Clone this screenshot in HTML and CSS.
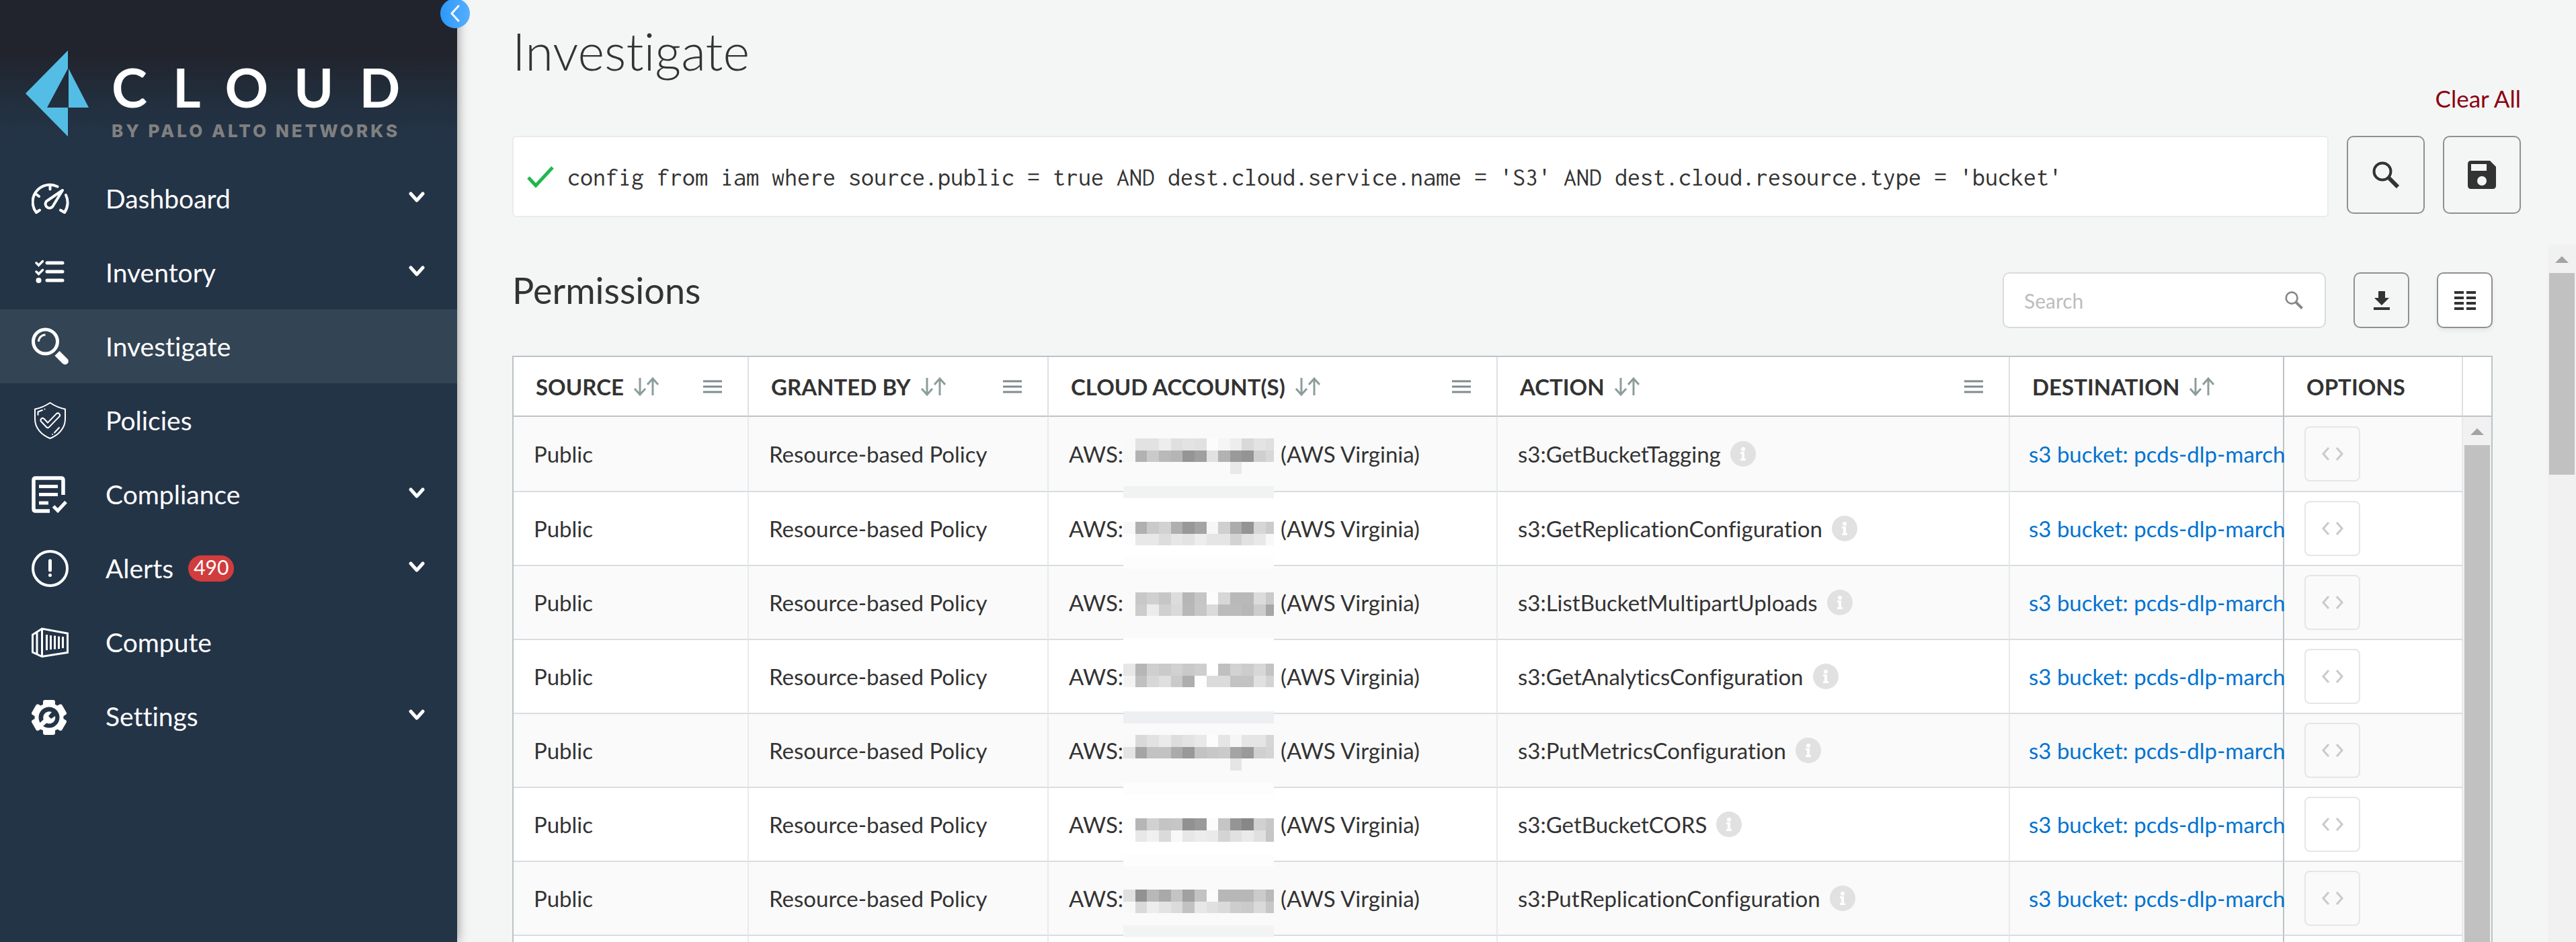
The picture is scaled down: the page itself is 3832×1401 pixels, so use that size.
FILE: index.html
```html
<!DOCTYPE html>
<html lang="en">
<head>
<meta charset="utf-8">
<title>Investigate</title>
<meta name="viewport" content="width=device-width, initial-scale=1">
<link rel="stylesheet" href="styles.css">
</head>
<body>
<svg class="sprite" aria-hidden="true">
  <symbol id="i-chevron" viewBox="0 0 24 16"><path d="M3 3l9 10 9-10" fill="none" stroke="currentColor" stroke-width="5" stroke-linecap="round" stroke-linejoin="round"/></symbol>
  <symbol id="i-sort" viewBox="0 0 40 28"><path d="M10 1v24M2 17l8 9 8-9M29 27V3M21 11l8-9 8 9" fill="none" stroke="currentColor" stroke-width="3"/></symbol>
  <symbol id="i-menu" viewBox="0 0 28 20"><path d="M0 2h28M0 10h28M0 18h28" stroke="currentColor" stroke-width="3"/></symbol>
  <symbol id="i-info" viewBox="0 0 38 38"><circle cx="19" cy="19" r="19" fill="#e1e1e1"/><circle cx="19" cy="12" r="3" fill="#fff"/><path d="M15 16h6v10h2v3h-8v-3h2v-7h-2z" fill="#fff"/></symbol>
  <symbol id="i-code" viewBox="0 0 34 20"><path d="M11 1L3 10l8 9M23 1l8 9-8 9" fill="none" stroke="currentColor" stroke-width="3"/></symbol>
  <symbol id="i-search" viewBox="0 0 40 40"><circle cx="15" cy="15" r="12.5" fill="none" stroke="currentColor" stroke-width="4"/><path d="M24 24l14 14" stroke="currentColor" stroke-width="6"/></symbol>
</svg>

<div class="app">
  <aside class="sidebar">
    <button class="collapse" type="button" aria-label="Collapse menu">
      <svg width="16" height="26" viewBox="0 0 16 26"><path d="M13 2L3 13l10 11" fill="none" stroke="#fff" stroke-width="3" stroke-linecap="round" stroke-linejoin="round"/></svg>
    </button>
    <div class="brand">
      <svg class="brand-mark" width="94" height="128" viewBox="0 0 94 128" aria-hidden="true"><path d="M63 0v27L32 85h31v43L0 64zM64 27l30 58H64z" fill="#54bde5"/></svg>
      <div class="brand-text">
        <span class="brand-name">CLOUD</span>
        <span class="brand-by">BY PALO ALTO NETWORKS</span>
      </div>
    </div>
    <nav class="nav">
      <a href="#" class="nav-item">
        <svg class="nav-icon" viewBox="0 0 56 56"><path d="M12 45.500l-5 3.500A25.500 25.500 0 0 1 38.500 10.500M43 45.500l6 3.500A26 26 0 0 0 51 23M27.500 8v6.500M7 22l4 3M46 16L24 31a6 6 0 1 0 8 8z" fill="none" stroke="#fff" stroke-width="4" stroke-linecap="round" stroke-linejoin="round"/></svg>
        <span>Dashboard</span><svg class="chevron"><use href="#i-chevron"/></svg></a>
      <a href="#" class="nav-item">
        <svg class="nav-icon" viewBox="0 0 56 56"><path d="M23 14h23M23 27h23M23 40h23" fill="none" stroke="#fff" stroke-width="5" stroke-linecap="round"/><path d="M7 14l3.500 3.500 6-6M7 27l3.500 3.500 6-6" fill="none" stroke="#fff" stroke-width="3.500" stroke-linecap="round"/><circle cx="10.500" cy="40" r="4" fill="#fff"/></svg>
        <span>Inventory</span><svg class="chevron"><use href="#i-chevron"/></svg></a>
      <a href="#" class="nav-item active" aria-current="page">
        <svg class="nav-icon" viewBox="0 0 56 56"><circle cx="20.500" cy="21" r="18" fill="none" stroke="#fff" stroke-width="5"/><path d="M10.500 21a10 10 0 0 1 10-10" fill="none" stroke="#fff" stroke-width="3"/><path d="M38 38.500L49.500 50" stroke="#fff" stroke-width="10"/><circle cx="49.800" cy="50.300" r="5" fill="#fff"/></svg>
        <span>Investigate</span></a>
      <a href="#" class="nav-item">
        <svg class="nav-icon" viewBox="0 0 56 56" fill="none" stroke="#fff" stroke-linecap="round" stroke-linejoin="round"><path d="M27.500 2C20 7 13 10 5 11.500V26c0 14 10 24 22.500 29C40 50 50 40 50 26V11.500C42 10 35 7 27.500 2zM9.500 20v-4.500L16 13M19.500 11.500h0M41 39l-7 7.500M31 49h0" stroke-width="2"/><path d="M16.500 28l7.500 8 15-15.500" stroke-width="8"/><path d="M16.500 28l7.500 8 15-15.500" stroke="#243447" stroke-width="4"/></svg>
        <span>Policies</span></a>
      <a href="#" class="nav-item">
        <svg class="nav-icon" viewBox="0 0 56 56" fill="none" stroke="#fff"><path d="M27 53H6q-3 0-3-3V7q0-3 3-3h38q3 0 3 3v22" stroke-width="5.500"/><path d="M11 16.500h28M11 28.500h28M11 41h14" stroke-width="5"/><path d="M31 44l8 8 14-14" stroke="#243447" stroke-width="14"/><path d="M32.500 46l6.500 6.500L51 39.500" stroke-width="5"/></svg>
        <span>Compliance</span><svg class="chevron"><use href="#i-chevron"/></svg></a>
      <a href="#" class="nav-item">
        <svg class="nav-icon" viewBox="0 0 56 56" fill="none" stroke="#fff"><circle cx="27.500" cy="28.500" r="25.500" stroke-width="4"/><path d="M27.500 17v14M27.500 38.500h0" stroke-width="5" stroke-linecap="round"/></svg>
        <span>Alerts</span><span class="badge">490</span><svg class="chevron"><use href="#i-chevron"/></svg></a>
      <a href="#" class="nav-item">
        <svg class="nav-icon" viewBox="0 0 56 56" fill="none" stroke="#fff"><path d="M1.500 17l14-9L53.500 15v28.500l-38 6-14-6.500zM15.500 8v41M8 13v33" stroke-width="3"/><path d="M22.500 17v23M28.500 18v21M34.500 18.500v20M40.500 19.500v18.500M46.500 20v17" stroke-width="3"/></svg>
        <span>Compute</span></a>
      <a href="#" class="nav-item">
        <svg class="nav-icon" viewBox="0 0 56 56"><g fill="#fff"><circle cx="26" cy="30" r="21.500"/><rect x="17" y="4" width="18" height="52" rx="3"/><rect x="17" y="4" width="18" height="52" rx="3" transform="rotate(60 26 30)"/><rect x="17" y="4" width="18" height="52" rx="3" transform="rotate(120 26 30)"/></g><circle cx="26" cy="30" r="15.500" fill="#243447"/><path d="M12 43l12-11" stroke="#fff" stroke-width="7"/><path d="M30 22l-5 6 4 4 6-4a9 9 0 1 1-5-6z" fill="#fff"/></svg>
        <span>Settings</span><svg class="chevron"><use href="#i-chevron"/></svg></a>
    </nav>
  </aside>

  <main class="main">
    <header class="page-head">
      <h1>Investigate</h1>
      <a href="#" class="clear-all">Clear All</a>
    </header>
    <form class="query-row">
      <label class="query-box">
        <svg width="40" height="32" viewBox="0 0 40 32" aria-hidden="true"><path d="M2 17l11 12L38 2" fill="none" stroke="#1fb84f" stroke-width="5"/></svg>
        <input class="query-input" type="text" aria-label="Query" spellcheck="false" value="config from iam where source.public = true AND dest.cloud.service.name = 'S3' AND dest.cloud.resource.type = 'bucket'">
      </label>
      <button class="btn-lg" type="button" aria-label="Run search"><svg width="40" height="40"><use href="#i-search"/></svg></button>
      <button class="btn-lg" type="button" aria-label="Save search"><svg width="42" height="42" viewBox="0 0 42 42"><path fill-rule="evenodd" d="M5 0h28l9 9v28q0 5-5 5H5q-5 0-5-5V5q0-5 5-5zM5 5v10h23V5zM21 23a7 7 0 1 0 0 14a7 7 0 1 0 0-14z" fill="currentColor"/></svg></button>
    </form>

    <div class="results">
      <section class="results-body">
        <div class="toolbar">
          <h2>Permissions</h2>
          <label class="search-box">
            <input type="search" placeholder="Search" aria-label="Search permissions">
            <svg width="27" height="27" aria-hidden="true"><use href="#i-search"/></svg>
          </label>
          <button class="btn-md" type="button" aria-label="Download"><svg width="24" height="28" viewBox="0 0 24 28"><path d="M7 0h10v10h6L12 21 1 10h6zM0 24h24v4H0z" fill="currentColor"/></svg></button>
          <button class="btn-md filled" type="button" aria-label="Columns"><svg width="32" height="28" viewBox="0 0 32 28"><path d="M0 2h14M18 2h14M0 10h14M18 10h14M0 18h14M18 18h14M0 26h14M18 26h14" stroke="currentColor" stroke-width="4"/></svg></button>
        </div>

        <div class="grid">
          <table>
            <colgroup><col class="c-source"><col class="c-granted"><col class="c-account"><col class="c-action"><col><col class="c-options"></colgroup>
            <thead>
              <tr>
                <th><div class="th"><span>SOURCE</span><svg class="sort"><use href="#i-sort"/></svg><svg class="menu"><use href="#i-menu"/></svg></div></th>
                <th><div class="th"><span>GRANTED BY</span><svg class="sort"><use href="#i-sort"/></svg><svg class="menu"><use href="#i-menu"/></svg></div></th>
                <th><div class="th"><span>CLOUD ACCOUNT(S)</span><svg class="sort"><use href="#i-sort"/></svg><svg class="menu"><use href="#i-menu"/></svg></div></th>
                <th><div class="th"><span>ACTION</span><svg class="sort"><use href="#i-sort"/></svg><svg class="menu"><use href="#i-menu"/></svg></div></th>
                <th><div class="th"><span>DESTINATION</span><svg class="sort"><use href="#i-sort"/></svg></div></th>
                <th><div class="th"><span>OPTIONS</span></div></th>
              </tr>
            </thead>
            <tbody>
              <tr>
                <td>Public</td><td>Resource-based Policy</td>
                <td><div class="td">AWS:<svg class="mask" data-mask="0"></svg>(AWS Virginia)</div></td>
                <td><div class="td">s3:GetBucketTagging<svg class="info"><use href="#i-info"/></svg></div></td>
                <td><a href="#">s3 bucket: pcds-dlp-march</a></td>
                <td><button class="code" type="button" aria-label="View policy"><svg width="34" height="20"><use href="#i-code"/></svg></button></td>
              </tr>
              <tr>
                <td>Public</td><td>Resource-based Policy</td>
                <td><div class="td">AWS:<svg class="mask" data-mask="1"></svg>(AWS Virginia)</div></td>
                <td><div class="td">s3:GetReplicationConfiguration<svg class="info"><use href="#i-info"/></svg></div></td>
                <td><a href="#">s3 bucket: pcds-dlp-march</a></td>
                <td><button class="code" type="button" aria-label="View policy"><svg width="34" height="20"><use href="#i-code"/></svg></button></td>
              </tr>
              <tr>
                <td>Public</td><td>Resource-based Policy</td>
                <td><div class="td">AWS:<svg class="mask" data-mask="2"></svg>(AWS Virginia)</div></td>
                <td><div class="td">s3:ListBucketMultipartUploads<svg class="info"><use href="#i-info"/></svg></div></td>
                <td><a href="#">s3 bucket: pcds-dlp-march</a></td>
                <td><button class="code" type="button" aria-label="View policy"><svg width="34" height="20"><use href="#i-code"/></svg></button></td>
              </tr>
              <tr>
                <td>Public</td><td>Resource-based Policy</td>
                <td><div class="td">AWS:<svg class="mask" data-mask="3"></svg>(AWS Virginia)</div></td>
                <td><div class="td">s3:GetAnalyticsConfiguration<svg class="info"><use href="#i-info"/></svg></div></td>
                <td><a href="#">s3 bucket: pcds-dlp-march</a></td>
                <td><button class="code" type="button" aria-label="View policy"><svg width="34" height="20"><use href="#i-code"/></svg></button></td>
              </tr>
              <tr>
                <td>Public</td><td>Resource-based Policy</td>
                <td><div class="td">AWS:<svg class="mask" data-mask="4"></svg>(AWS Virginia)</div></td>
                <td><div class="td">s3:PutMetricsConfiguration<svg class="info"><use href="#i-info"/></svg></div></td>
                <td><a href="#">s3 bucket: pcds-dlp-march</a></td>
                <td><button class="code" type="button" aria-label="View policy"><svg width="34" height="20"><use href="#i-code"/></svg></button></td>
              </tr>
              <tr>
                <td>Public</td><td>Resource-based Policy</td>
                <td><div class="td">AWS:<svg class="mask" data-mask="5"></svg>(AWS Virginia)</div></td>
                <td><div class="td">s3:GetBucketCORS<svg class="info"><use href="#i-info"/></svg></div></td>
                <td><a href="#">s3 bucket: pcds-dlp-march</a></td>
                <td><button class="code" type="button" aria-label="View policy"><svg width="34" height="20"><use href="#i-code"/></svg></button></td>
              </tr>
              <tr>
                <td>Public</td><td>Resource-based Policy</td>
                <td><div class="td">AWS:<svg class="mask" data-mask="6"></svg>(AWS Virginia)</div></td>
                <td><div class="td">s3:PutReplicationConfiguration<svg class="info"><use href="#i-info"/></svg></div></td>
                <td><a href="#">s3 bucket: pcds-dlp-march</a></td>
                <td><button class="code" type="button" aria-label="View policy"><svg width="34" height="20"><use href="#i-code"/></svg></button></td>
              </tr>
              <tr><td></td><td></td><td></td><td></td><td></td><td></td></tr>
            </tbody>
          </table>
          <div class="grid-gutter">
            <div class="gutter-head"></div>
            <div class="scrollbar"><span class="arrow"></span><span class="thumb thumb-full"></span></div>
          </div>
        </div>
      </section>
      <div class="scrollbar"><span class="arrow"></span><span class="thumb"></span></div>
    </div>
  </main>
</div>
<script src="script.js"></script>
</body>
</html>
```
FILE: styles.css
```css
* { box-sizing: border-box; }
body {
  margin: 0;
  background: #f4f6f5;
  color: #333;
  font-family: Lato, "Open Sans", sans-serif;
  font-size: 33px;
  font-variant-ligatures: none;
}
a { color: inherit; text-decoration: none; }
button { margin: 0; padding: 0; font: inherit; color: inherit; cursor: pointer; }
svg { display: block; flex: none; }
.sprite { display: none; }

.app { display: flex; height: 100vh; overflow: hidden; }

/* Sidebar */
.sidebar {
  position: relative;
  flex: none;
  width: 680px;
  background: linear-gradient(#21242d 80px, #223040 160px, #243447 210px);
  box-shadow: 0 0 16px rgba(0, 0, 0, .45);
  color: #fff;
}
.collapse {
  position: absolute;
  top: -2px;
  right: -19px;
  display: flex;
  align-items: center;
  justify-content: center;
  width: 44px;
  height: 44px;
  border: 0;
  border-radius: 50%;
  background: linear-gradient(90deg, #2b98fa, #57aeff);
}
.brand { display: flex; gap: 34px; height: 240px; padding: 75px 0 0 38px; }
.brand-text { display: flex; flex-direction: column; white-space: nowrap; }
.brand-name { height: 106px; padding-top: 6px; font-size: 80px; line-height: 96px; font-weight: 700; letter-spacing: 38px; }
.brand-by { color: #808080; font-family: Inter, sans-serif; font-size: 26px; line-height: 28px; font-weight: 800; letter-spacing: 4px; }
.nav-item {
  display: flex;
  align-items: center;
  height: 110px;
  padding: 0 48px 0 47px;
  font-size: 39px;
  line-height: 48px;
}
.nav-item.active { background: #334454; }
.nav-icon { width: 56px; height: 56px; margin-right: 54px; }
.chevron { width: 24px; height: 16px; margin: 0 0 4px auto; }
.badge {
  height: 39px;
  margin-left: 22px;
  padding: 0 8px;
  border-radius: 20px;
  background: #d13c3d;
  font-size: 30px;
  line-height: 34px;
}

/* Page head */
.main { flex: 1; min-width: 0; display: flex; flex-direction: column; }
.page-head { display: flex; flex-direction: column; padding: 28px 82px 34px; }
h1 { margin: 0; font-size: 76px; line-height: 96px; font-weight: 300; }
.clear-all { align-self: flex-end; color: #8b0012; font-size: 35px; line-height: 44px; }

/* Query */
.query-row { display: flex; gap: 27px; padding: 0 82px 41px; }
.query-box {
  flex: 1;
  display: flex;
  align-items: center;
  gap: 20px;
  height: 121px;
  padding: 0 20px;
  border: 2px solid #ebebeb;
  border-radius: 6px;
  background: #fff;
}
.query-input {
  flex: 1;
  min-width: 0;
  padding: 0;
  border: 0;
  outline: 0;
  background: none;
  color: #333;
  font-family: Inconsolata, "Liberation Mono", monospace;
  font-size: 38px;
  line-height: 48px;
}
.btn-lg, .btn-md {
  flex: none;
  display: flex;
  align-items: center;
  justify-content: center;
  border: 2px solid #8f9191;
  border-radius: 10px;
  background: none;
}
.btn-lg { width: 116px; height: 116px; }
.btn-md { width: 83px; height: 83px; }
.btn-md.filled { background: #fff; box-shadow: 0 4px 6px rgba(0, 0, 0, .06); }

/* Results */
.results { flex: 1; min-height: 0; display: flex; }
.results-body { flex: 1; min-width: 0; overflow: hidden; padding: 41px 82px 0; }
.toolbar { display: flex; align-items: flex-start; gap: 41px; margin-bottom: 41px; }
h2 { flex: 1; margin: 0; font-size: 54px; line-height: 54px; font-weight: 400; }
.search-box {
  display: flex;
  align-items: center;
  width: 481px;
  height: 83px;
  padding: 0 32px 0 30px;
  border: 2px solid #d9dbdb;
  border-radius: 10px;
  background: #fff;
  color: #888;
}
.search-box input { flex: 1; min-width: 0; padding: 0; border: 0; outline: 0; background: none; font: inherit; font-size: 30px; line-height: 40px; }
.search-box input::placeholder { color: #bdbdbd; opacity: 1; }

.grid { display: flex; border: 2px solid #bdc3c7; background: #fff; }
table { flex: 1; width: 0; table-layout: fixed; border-collapse: separate; border-spacing: 0; }
.c-source { width: 350px; }
.c-granted { width: 446px; }
.c-account { width: 668px; }
.c-action { width: 762px; }
.c-options { width: 266px; }
th {
  height: 89px;
  padding: 0 38px 0 33px;
  border-right: 2px solid #dde1e4;
  border-bottom: 2px solid #bdc3c7;
  font-size: 33px;
  font-weight: 700;
  text-align: left;
  white-space: nowrap;
}
.th { display: flex; align-items: center; }
.sort { width: 40px; height: 28px; margin-left: 14px; color: #8d9c9c; }
.menu { width: 28px; height: 20px; margin-left: auto; color: #7f8c8d; }
td {
  height: 110px;
  padding: 0 0 0 30px;
  border-right: 2px solid #e8eaeb;
  border-bottom: 2px solid #d8dde1;
  white-space: nowrap;
}
th:nth-child(5), td:nth-child(5) { border-right-color: #bdc3c7; }
td:nth-child(5) { padding-left: 28px; }
tbody tr:first-child td { height: 112px; }
tbody tr:nth-child(odd) { background: #fafafa; }
.td { display: flex; align-items: center; }
.mask { width: 224px; height: 36px; margin-right: 10px; overflow: visible; }
.info { width: 38px; height: 38px; margin-left: 14px; }
td a { color: #0073d1; }
.code {
  display: flex;
  align-items: center;
  justify-content: center;
  width: 83px;
  height: 82px;
  border: 2px solid #e6e6e6;
  border-radius: 8px;
  background: none;
  color: #cacaca;
}
.grid-gutter { flex: none; width: 42px; display: flex; flex-direction: column; }
.gutter-head { height: 89px; border-bottom: 2px solid #bdc3c7; }

.scrollbar {
  flex: 1 0 auto;
  display: flex;
  flex-direction: column;
  align-items: center;
  width: 42px;
  background: #f1f1f1;
}
.results > .scrollbar { flex: none; }
.arrow { margin: 17px 0 15px; border: 10px solid transparent; border-top: 0; border-bottom-color: #a3a3a3; }
.thumb { width: 38px; height: 300px; background: #c1c1c1; }
.thumb-full { flex: 1; }
```
FILE: script.js
```js
// Pixelated masks over the account names.
// y: top of the first band; bands: grey levels (hex pairs) for each 18px-high band; line: [y, height, colour] of the smear below.
const masks = [
  { y: -5, bands: ["f9e2e2eddfe3e1fcf5edd9e3df", "f7b2cab9b5959fe1b29a94cfd8"], tail: "e9", line: [66, 18, "#f0f3f2"] },
  { y: 8, bands: ["f7b0cad2af98a4f7cfac94d6cb", "fde8e8dde7e3ede5e5d3e1e8f8"], line: [60, 18, "#fdfdfd"] },
  { y: 3, bands: ["fac8d0c6dcb6c5fcd7b9b9dcca", "faccecd0d9b8c6dabbbbb7cca6"], line: [71, 3, "#fdfdfd"] },
  { y: -1, bands: ["e7b6cfcad1c9ceffc0d2ccd7c3", "f3c0d7dfcaaefedbdbc3c3e1d3"], line: [70, 18, "#eeeff2"] },
  { y: -5, bands: ["f9d9e2ebdde3e9fce5f6e5e5d6", "e4a5c2c2aa99c3c7caa49ad0d4"], tail: "e5", line: [66, 18, "#fdfdfd"] },
  { y: 9, bands: ["feb6d1c4c6919afbc59587d1c7", "fee8f0daf8e7ecead4e1eae0c6"], line: [62, 18, "#fdfdfd"] },
  { y: 5, bands: ["e092b8a9c4a1c3fbb7b7b7cbb9", "f8d9ede3dbc2e7e0dacdcadac7"], line: [58, 18, "#f2f4f3"] }
];
const edges = [0, 18, 35, 53, 71, 88, 106, 124, 141, 159, 176, 194, 212, 224];

function rect(svg, x, y, w, h, fill) {
  const r = document.createElementNS("http://www.w3.org/2000/svg", "rect");
  for (const [k, v] of Object.entries({ x, y, width: w, height: h, fill })) r.setAttribute(k, v);
  svg.append(r);
}

document.querySelectorAll(".mask").forEach((svg) => {
  const m = masks[svg.dataset.mask];
  m.bands.forEach((band, b) => {
    band.match(/../g).forEach((g, i) => {
      rect(svg, edges[i], m.y + b * 18, edges[i + 1] - edges[i], b ? 17 : 18, "#" + g + g + g);
    });
  });
  if (m.tail) rect(svg, edges[9], m.y + 35, 17, 18, "#" + m.tail.repeat(3));
  rect(svg, 0, m.line[0], 224, m.line[1], m.line[2]);
});
```
